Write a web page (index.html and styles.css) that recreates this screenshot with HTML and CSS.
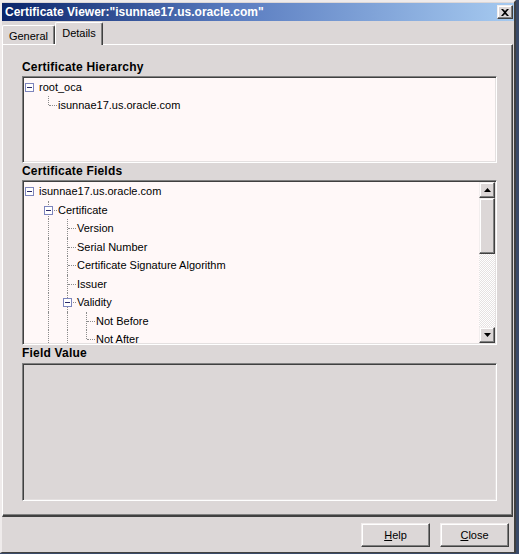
FILE: index.html
```html
<!DOCTYPE html>
<html>
<head>
<meta charset="utf-8">
<link rel="stylesheet" href="styles.css">
</head>
<body>
<div class="window">
  <div class="titlebar">
    <span class="title">Certificate Viewer:"isunnae17.us.oracle.com"</span>
    <button class="tbtn raised" aria-label="Close">
      <svg width="8" height="7" viewBox="0 0 8 7"><path d="M0 0h2l2 2 2-2h2L5 3.5 8 7H6L4 5 2 7H0l3-3.5z" fill="#000"/></svg>
    </button>
  </div>
  <div class="tabs">
    <div class="tab">General</div>
    <div class="tab active">Details</div>
  </div>
  <div class="panel">
    <div class="label">Certificate Hierarchy</div>
    <div class="box white hier">
      <div class="tree">
        <div class="row"><span class="col"><span class="hbox"></span></span><span class="txt">root_oca</span></div>
        <div class="row"><span class="col"></span><span class="col l"></span><span class="txt">isunnae17.us.oracle.com</span></div>
      </div>
    </div>
    <div class="label">Certificate Fields</div>
    <div class="box white fields">
      <div class="tree">
        <div class="row"><span class="col"><span class="hbox"></span></span><span class="txt">isunnae17.us.oracle.com</span></div>
        <div class="row"><span class="col"></span><span class="col e"><span class="hbox"></span></span><span class="txt">Certificate</span></div>
        <div class="row"><span class="col"></span><span class="col g"></span><span class="col e"></span><span class="txt">Version</span></div>
        <div class="row"><span class="col"></span><span class="col g"></span><span class="col e"></span><span class="txt">Serial Number</span></div>
        <div class="row"><span class="col"></span><span class="col g"></span><span class="col e"></span><span class="txt">Certificate Signature Algorithm</span></div>
        <div class="row"><span class="col"></span><span class="col g"></span><span class="col e"></span><span class="txt">Issuer</span></div>
        <div class="row"><span class="col"></span><span class="col g"></span><span class="col e"><span class="hbox"></span></span><span class="txt">Validity</span></div>
        <div class="row"><span class="col"></span><span class="col g"></span><span class="col g"></span><span class="col e"></span><span class="txt">Not Before</span></div>
        <div class="row"><span class="col"></span><span class="col g"></span><span class="col g"></span><span class="col l"></span><span class="txt">Not After</span></div>
      </div>
      <div class="scrollbar">
        <div class="sbtn raised"><svg width="7" height="4" viewBox="0 0 7 4"><path d="M3.5 0L7 4H0z" fill="#000"/></svg></div>
        <div class="thumb raised"></div>
        <div class="track"></div>
        <div class="sbtn raised"><svg width="7" height="4" viewBox="0 0 7 4"><path d="M0 0h7L3.5 4z" fill="#000"/></svg></div>
      </div>
    </div>
    <div class="label">Field Value</div>
    <div class="box value"></div>
  </div>
  <div class="footer">
    <button class="btn raised"><u>H</u>elp</button>
    <button class="btn raised"><u>C</u>lose</button>
  </div>
</div>
</body>
</html>
```
FILE: styles.css
```css
html, body {
  margin: 0;
  padding: 0;
}
body {
  background: #3a4a68;
  font-family: "Liberation Sans", Arial, sans-serif;
  font-size: 11px;
  color: #000;
  width: 519px;
  height: 554px;
  overflow: hidden;
}
.window {
  width: 516px;
  height: 553px;
  box-sizing: border-box;
  background: #dcd7d7;
  border-style: solid;
  border-width: 2px 2px 1px 2px;
  border-color: #efebeb #404040 #404040 #efebeb;
  padding-top: 1px;
  display: flex;
  flex-direction: column;
}
.titlebar {
  height: 18px;
  flex: none;
  display: flex;
  align-items: center;
  justify-content: space-between;
  padding-left: 3px;
  padding-right: 1px;
  background: linear-gradient(to right, #0a246a 0%, #5a7cc0 45%, #a6caf0 100%);
}
.title {
  color: #fff;
  font-weight: bold;
  font-size: 12px;
  white-space: nowrap;
}
.raised {
  box-sizing: border-box;
  background: #dcd7d7;
  border: 1px solid;
  border-color: #f2eeee #404040 #404040 #f2eeee;
  box-shadow: inset -1px -1px #808080, inset 1px 1px #ffffff;
}
.tbtn {
  width: 16px;
  height: 14px;
  padding: 0;
  display: flex;
  align-items: center;
  justify-content: center;
}
.tabs {
  height: 23px;
  flex: none;
  display: flex;
  align-items: flex-end;
  position: relative;
  z-index: 1;
}
.tab {
  box-sizing: border-box;
  height: 19px;
  width: 53px;
  border-top: 1px solid #fff;
  border-left: 1px solid #fff;
  border-right: 1px solid #404040;
  box-shadow: inset -1px 0 #808080;
  border-radius: 2px 2px 0 0;
  display: flex;
  align-items: center;
  justify-content: center;
  padding-top: 1px;
}
.tab.active {
  width: 48px;
  height: 23px;
  margin-bottom: -1px;
  background: #dcd7d7;
  padding-top: 0;
  padding-bottom: 3px;
}
.panel {
  height: 473px;
  flex: none;
  box-sizing: border-box;
  margin-right: 1px;
  border-top: 1px solid #fff;
  border-left: 1px solid #fff;
  border-right: 1px solid #404040;
  border-bottom: 2px solid #404040;
  box-shadow: inset -1px -1px #808080;
  padding: 14px 15px 15px 19px;
  display: flex;
  flex-direction: column;
}
.label {
  height: 16px;
  line-height: 16px;
  font-weight: bold;
  font-size: 12px;
  letter-spacing: 0.2px;
  flex: none;
}
.box {
  box-sizing: border-box;
  width: 475px;
  flex: none;
  border: 1px solid;
  border-color: #808080 #ffffff #ffffff #808080;
  box-shadow: inset 1px 1px #404040, inset -1px -1px #e4e0e0;
  padding: 1px 2px 2px 2px;
  overflow: hidden;
}
.white {
  background: #fff8f8;
}
.hier {
  height: 87px;
  margin-top: 1px;
}
.fields {
  height: 165px;
  margin-top: 1px;
  display: flex;
  padding-right: 1px;
  padding-bottom: 1px;
}
.value {
  height: 138px;
  margin-top: 2px;
  background: #dcd7d7;
}
.tree {
  flex: 1;
  margin-left: -5px;
  overflow: hidden;
}
.hier .row {
  height: 18px;
}
.row {
  display: flex;
  height: 18.5px;
  align-items: stretch;
  white-space: nowrap;
}
.txt {
  display: flex;
  align-items: center;
}
.col {
  position: relative;
  width: 19px;
  flex: none;
}
.col.g::before,
.col.e::before,
.col.l::before {
  content: "";
  position: absolute;
  left: 9px;
  top: 0;
  height: 100%;
  border-left: 1px dotted #8c8c8c;
}
.col.l::before {
  height: 9px;
}
.col.e::after,
.col.l::after {
  content: "";
  position: absolute;
  left: 10px;
  top: 9px;
  width: 8px;
  border-top: 1px dotted #8c8c8c;
}
.hbox {
  position: absolute;
  left: 5px;
  top: 5px;
  width: 9px;
  height: 9px;
  box-sizing: border-box;
  border: 1px solid #7d85bd;
  background: #fff;
  z-index: 1;
}
.hbox::after {
  content: "";
  position: absolute;
  left: 1px;
  top: 3px;
  width: 5px;
  height: 1px;
  background: #2a2a6a;
}
.scrollbar {
  width: 16px;
  flex: none;
  display: flex;
  flex-direction: column;
}
.sbtn {
  height: 16px;
  flex: none;
  display: flex;
  align-items: center;
  justify-content: center;
}
.thumb {
  height: 56px;
  flex: none;
}
.track {
  flex: 1;
  background-color: #f4f0f0;
  background-image: conic-gradient(#ffffff 25%, #e6e2e2 0 50%, #ffffff 0 75%, #e6e2e2 0);
  background-size: 2px 2px;
}
.footer {
  flex: 1;
  display: flex;
  justify-content: flex-end;
  align-items: flex-start;
  gap: 10px;
  padding: 6px 5px 0 0;
}
.btn {
  width: 69px;
  height: 24px;
  padding: 0;
  font-family: "Liberation Sans", Arial, sans-serif;
  font-size: 11px;
  color: #000;
}
.btn u {
  text-decoration: underline;
  text-underline-offset: 1px;
}
```
